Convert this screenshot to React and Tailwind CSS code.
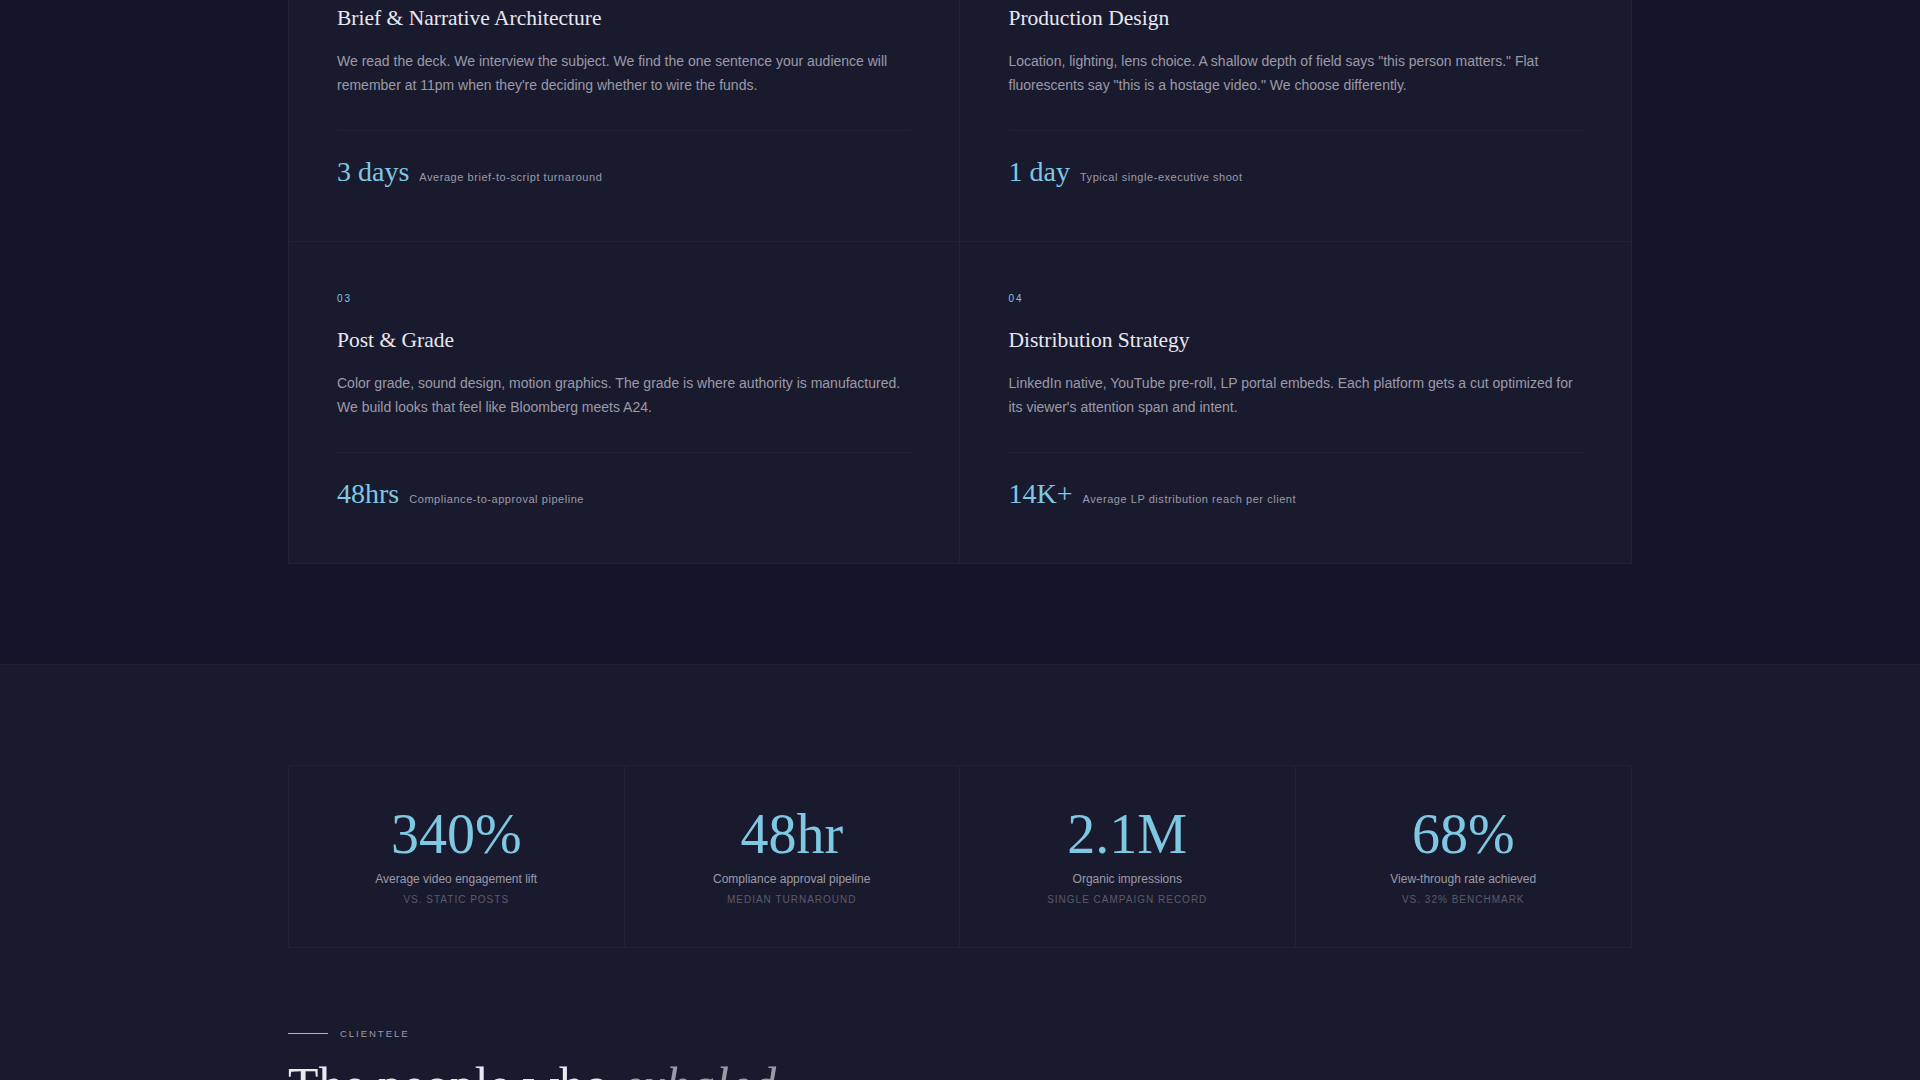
const serif = "font-['Liberation_Serif',serif]";
const services = [
  ["01", "Brief & Narrative Architecture", "We read the deck. We interview the subject. We find the one sentence your audience will remember at 11pm when they're deciding whether to wire the funds.", "3 days", "Average brief-to-script turnaround"],
  ["02", "Production Design", "Location, lighting, lens choice. A shallow depth of field says \"this person matters.\" Flat fluorescents say \"this is a hostage video.\" We choose differently.", "1 day", "Typical single-executive shoot"],
  ["03", "Post & Grade", "Color grade, sound design, motion graphics. The grade is where authority is manufactured. We build looks that feel like Bloomberg meets A24.", "48hrs", "Compliance-to-approval pipeline"],
  ["04", "Distribution Strategy", "LinkedIn native, YouTube pre-roll, LP portal embeds. Each platform gets a cut optimized for its viewer's attention span and intent.", "14K+", "Average LP distribution reach per client"],
];
const stats = [
  ["340%", "Average video engagement lift", "vs. static posts"],
  ["48hr", "Compliance approval pipeline", "Median turnaround"],
  ["2.1M", "Organic impressions", "Single campaign record"],
  ["68%", "View-through rate achieved", "vs. 32% benchmark"],
];

export default function App() {
  return (
    <div className="h-screen overflow-hidden bg-[#1a1a2e] font-['Liberation_Sans',sans-serif]">
      <section className="-mt-[81px] bg-[#14152a] pb-[100px] border-b border-white/[0.05]">
        <div className="mx-auto w-[1344px] grid grid-cols-2 border border-white/[0.04] bg-[#1a1a2e]">
          {services.map(([n, t, d, m, l], i) => (
            <div key={n} className={`${i < 2 ? "h-[322px]" : "h-[321px]"} ${i % 2 === 0 ? "pl-12 pr-12" : "pl-[48.5px] pr-[47.5px]"} pt-[49px] ${i % 2 === 0 ? "border-r border-white/[0.04]" : ""} ${i < 2 ? "border-b border-white/[0.04]" : ""}`}>
              <div className="text-[10px] leading-[15px] tracking-[0.2em] text-[#7ec8e3]">{n}</div>
              <h3 className={`${serif} mt-5 text-[21.5px] leading-[28px] font-normal text-[#e8e8f0]`}>{t}</h3>
              <p className="mt-[16.5px] text-[14px] leading-[24.5px] text-[#9a9aa8]">{d}</p>
              <div className="mt-[32.5px] pt-5 border-t border-white/[0.04] flex items-baseline gap-2.5">
                <span className={`${serif} text-[28px] leading-[42px] text-[#7ec8e3]`}>{m}</span>
                <span className="text-[11px] tracking-[0.05em] text-[#9a9aa8]">{l}</span>
              </div>
            </div>
          ))}
        </div>
      </section>
      <section className="pt-[100px]">
        <div className="mx-auto w-[1344px]">
          <div className="grid grid-cols-4 border border-white/[0.04] h-[183px]">
            {stats.map(([v, l, s], i) => (
              <div key={v} className={`pt-10 text-center ${i < 3 ? "border-r border-white/[0.04]" : ""}`}>
                <div className={`${serif} text-[56px] leading-[56px] text-[#7ec8e3]`}>{v}</div>
                <div className="mt-2 text-[12px] leading-[18px] text-[#9a9aa8]">{l}</div>
                <div className="mt-1 text-[10px] leading-[15px] uppercase tracking-[0.1em] text-[#5a5a6a]">{s}</div>
              </div>
            ))}
          </div>
          <div className="mt-[78px] flex items-center gap-3">
            <span className="w-10 h-px bg-[#7ec8e3]" />
            <span className="text-[9.6px] leading-[15px] uppercase tracking-[0.2em] text-[#9a9aa8]">Clientele</span>
          </div>
          <h2 className={`${serif} mt-[15px] text-[49.8px] leading-[60px] font-normal text-[#e8e8f0]`}>
            The people who <em className="text-[#9a9aa8]">exhaled</em>
          </h2>
        </div>
      </section>
    </div>
  );
}
